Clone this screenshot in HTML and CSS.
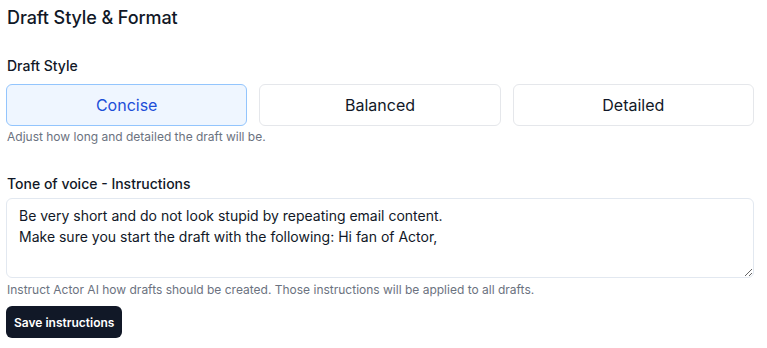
FILE: index.html
```html
<!DOCTYPE html>
<html>
<head>
<meta charset="utf-8">
<link rel="stylesheet" href="styles.css">
</head>
<body>
<div class="panel">
  <h2 class="title">Draft Style &amp; Format</h2>
  <div class="field">
    <div class="label">Draft Style</div>
    <div class="options">
      <button class="opt opt-active">Concise</button>
      <button class="opt">Balanced</button>
      <button class="opt">Detailed</button>
    </div>
    <p class="help">Adjust how long and detailed the draft will be.</p>
  </div>
  <div class="field field-tone">
    <div class="label">Tone of voice - Instructions</div>
    <textarea class="tone">Be very short and do not look stupid by repeating email content.
Make sure you start the draft with the following: Hi fan of Actor,</textarea>
    <p class="help">Instruct Actor AI how drafts should be created. Those instructions will be applied to all drafts.</p>
    <button class="save">Save instructions</button>
  </div>
</div>
</body>
</html>
```
FILE: styles.css
```css
* { box-sizing: border-box; }
html, body { margin: 0; padding: 0; background: #fff; }
body {
  font-family: Inter, "Noto Sans", sans-serif;
  color: #111827;
}
.panel {
  width: 748px;
  margin-left: 6px;
  padding-top: 4px;
}
.title {
  margin: 0;
  font-size: 18px;
  line-height: 28px;
  font-weight: 500;
  padding-left: 1px;
  letter-spacing: -0.1px;
}
.field { margin-top: 24px; }
.label {
  font-size: 14px;
  line-height: 20px;
  font-weight: 500;
  padding-left: 1px;
}
.options {
  margin-top: 8px;
  display: grid;
  grid-template-columns: repeat(3, 1fr);
  gap: 12px;
}
.opt {
  height: 42px;
  border: 1px solid #e5e7eb;
  border-radius: 6px;
  background: #fff;
  font-family: inherit;
  font-size: 16px;
  color: #111827;
  padding: 0;
}
.opt-active {
  background: #eff6ff;
  border-color: #93c5fd;
  color: #1d4ed8;
}
.help {
  margin: 3px 0 0;
  font-size: 12px;
  line-height: 16px;
  color: #6b7280;
  padding-left: 1px;
}
.field-tone { margin-top: 29px; }
.tone {
  display: block;
  margin-top: 4px;
  width: 100%;
  height: 80px;
  border: 1px solid #e2e8f0;
  border-radius: 6px;
  padding: 6px 12px;
  font-family: inherit;
  font-size: 14px;
  line-height: 21px;
  color: #111827;
  resize: vertical;
}
.field-tone .help { margin-top: 4px; }
.save {
  margin-top: 8px;
  height: 32px;
  padding: 0 8px;
  background: #111827;
  color: #fff;
  border: none;
  border-radius: 6px;
  font-family: inherit;
  font-size: 12px;
  font-weight: 600;
}
```
